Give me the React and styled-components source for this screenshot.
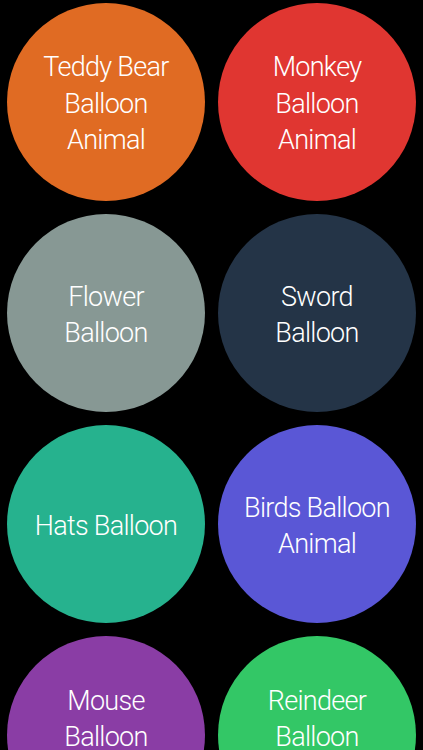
import React from 'react';
import styled, { createGlobalStyle } from 'styled-components';

const GlobalStyle = createGlobalStyle`
  html, body {
    margin: 0;
    background: #000;
    overflow: hidden;
  }
`;

const Page = styled.div`
  height: 750px;
  overflow: hidden;
  background: #000;
  padding: 3px 7px 0;
  box-sizing: border-box;
`;

const Grid = styled.div`
  display: grid;
  grid-template-columns: repeat(2, 198px);
  column-gap: 13px;
  row-gap: 13px;
`;

const Bubble = styled.button`
  width: 198px;
  height: 198px;
  border-radius: 50%;
  border: none;
  padding: ${({ lift }) => (lift ? '0 18px 32px' : '4px 18px 0')};
  background: ${({ color }) => color};
  color: #fff;
  display: flex;
  align-items: center;
  justify-content: center;
  text-align: center;
  font-family: Roboto, "Liberation Sans", sans-serif;
  font-weight: 300;
  font-size: 27px;
  line-height: 36.5px;
  letter-spacing: -0.7px;
  cursor: pointer;
`;

const items = [
  { label: ['Teddy Bear', 'Balloon', 'Animal'], color: '#e06b23' },
  { label: ['Monkey', 'Balloon', 'Animal'], color: '#e03631' },
  { label: ['Flower', 'Balloon'], color: '#879894' },
  { label: ['Sword', 'Balloon'], color: '#243447' },
  { label: ['Hats Balloon'], color: '#26b28e' },
  { label: ['Birds Balloon', 'Animal'], color: '#5a57d6' },
  { label: ['Mouse', 'Balloon'], color: '#8a3da5', lift: true },
  { label: ['Reindeer', 'Balloon'], color: '#33c766', lift: true },
];

const Home = () => (
  <Page>
    <GlobalStyle />
    <Grid>
      {items.map((item, index) => (
        <Bubble key={index} color={item.color} lift={item.lift}>
          <span>
            {item.label.map((line, i) => (
              <React.Fragment key={i}>
                {i > 0 && <br />}
                {line}
              </React.Fragment>
            ))}
          </span>
        </Bubble>
      ))}
    </Grid>
  </Page>
);

export default Home;
